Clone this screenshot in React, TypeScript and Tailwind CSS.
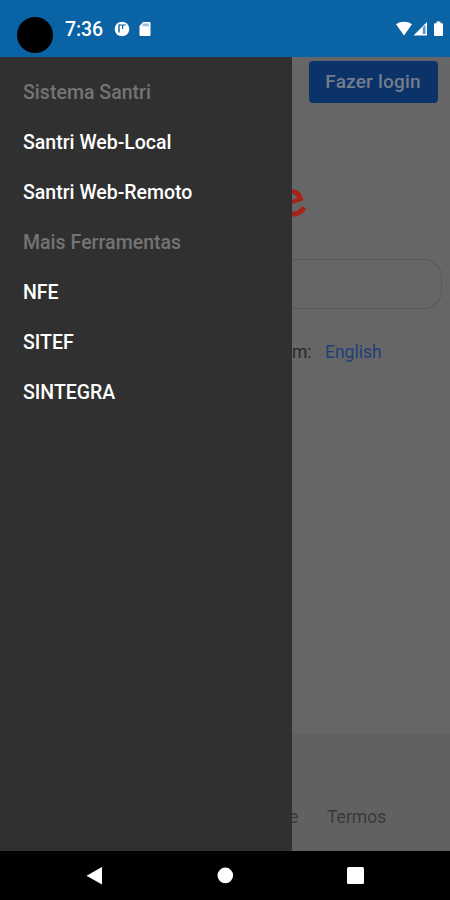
type MenuEntry = {
  label: string;
  heading?: boolean;
};

const entries: MenuEntry[] = [
  { label: 'Sistema Santri', heading: true },
  { label: 'Santri Web-Local' },
  { label: 'Santri Web-Remoto' },
  { label: 'Mais Ferramentas', heading: true },
  { label: 'NFE' },
  { label: 'SITEF' },
  { label: 'SINTEGRA' },
];

function StatusBar() {
  return (
    <header className="flex h-[57px] shrink-0 items-start bg-[#0963a4] pl-[17px] text-white">
      <div className="mt-[17px] size-[36px] rounded-full bg-black" />
      <span className="mt-[18px] ml-[12px] w-[38px] text-[19.5px] leading-[24px] font-medium tracking-[-0.1px] whitespace-nowrap">7:36</span>
      <svg className="mt-[21px] ml-[11px]" width="16" height="16" viewBox="0 0 16 16">
        <circle cx="8" cy="8" r="7.3" fill="white" />
        <path d="M5 3.5v8" stroke="#0963a4" strokeWidth="1.4" />
        <path d="M8.6 4v4" stroke="#0963a4" strokeWidth="1.2" />
        <path d="M5 4h6.8" stroke="#0963a4" strokeWidth="1" />
      </svg>
      <svg className="mt-[21px] ml-[8px]" width="14" height="16" viewBox="0 0 14 16">
        <path d="M5 1h6.5a1 1 0 0 1 1 1v12a1 1 0 0 1-1 1h-9a1 1 0 0 1-1-1V5z" fill="white" />
        <path d="M4.5 2.5h6.5v2.8H4.5z" fill="#9dbfdc" />
      </svg>
      <div className="mt-[21px] mr-[6px] ml-auto flex">
        <svg width="18" height="16" viewBox="0 0 18 16">
          <path d="M1 3.2C5.4-.1 12.6-.1 17 3.2L9 14.4z" fill="white" />
        </svg>
        <svg width="15" height="16" viewBox="0 0 15 16">
          <path d="M14 1v13.5H.5z" fill="white" />
          <path d="M9.8 6.5 12.5 4v9H9.8z" fill="#5795c3" />
        </svg>
        <svg className="ml-[5px]" width="11" height="16" viewBox="0 0 11 16">
          <path d="M3.5.5h4v1.7H9a1 1 0 0 1 1 1V14a1 1 0 0 1-1 1H2a1 1 0 0 1-1-1V3.2a1 1 0 0 1 1-1h1.5z" fill="white" />
        </svg>
      </div>
    </header>
  );
}

function Drawer() {
  return (
    <nav className="w-[292px] shrink-0 bg-[#303030] pt-[11px]">
      <ul>
        {entries.map((entry) => (
          <li
            key={entry.label}
            className={`flex h-[50px] items-center pl-[23px] text-[19.5px] font-medium ${
              entry.heading ? 'tracking-[0.03px] text-[#747474]' : 'text-white'
            }`}
          >
            {entry.label}
          </li>
        ))}
      </ul>
    </nav>
  );
}

// The part of the search page that stays visible beside the open drawer
function DimmedPage() {
  return (
    <main className="flex min-w-0 flex-1 flex-col overflow-hidden bg-[#666666]">
      <button className="mt-[4px] ml-[17px] h-[42px] w-[129px] shrink-0 rounded-[4px] bg-[#0b3269] pr-[1px] text-[19px] font-medium tracking-[0.2px] text-[#747d8b]">
        Fazer login
      </button>
      <div className="mt-[66px] h-[56px] shrink-0">
        <span className="-ml-[16px] inline-block -rotate-[18deg] font-['Lato'] text-[52px] leading-[56px] font-bold text-[#a62318]">
          e
        </span>
      </div>
      <div className="mt-[34px] mr-[8px] h-[50px] shrink-0 rounded-r-[18px] border border-l-0 border-[#5a5a5a]" />
      <p className="mt-[31px] flex h-[24px] shrink-0 text-[17.5px] leading-[24px]">
        <span className="w-[33px] text-[#292929]">m:</span>
        <a className="text-[#203f77]">English</a>
      </p>
      <footer className="mt-auto h-[117px] shrink-0 bg-[#616161]">
        <div className="h-[47px] border-b border-[#5e5e5e]" />
        <div className="flex h-[72px] items-center text-[17.5px] text-[#393939]">
          <span className="-ml-[3px] w-[38px]">e</span>
          <span>Termos</span>
        </div>
      </footer>
    </main>
  );
}

function NavigationBar() {
  return (
    <div className="flex h-[49px] shrink-0 items-center bg-black">
      <svg width="450" height="49" viewBox="0 0 450 49" fill="white">
        <path d="M102 16v17.5L86.5 24.7z" />
        <circle cx="225.3" cy="24.4" r="7.8" />
        <rect x="347" y="16" width="17" height="17" rx="1.5" />
      </svg>
    </div>
  );
}

export default function App() {
  return (
    <div className="flex h-[900px] w-[450px] flex-col overflow-hidden font-['Roboto',sans-serif]">
      <StatusBar />
      <div className="flex min-h-0 flex-1">
        <Drawer />
        <DimmedPage />
      </div>
      <NavigationBar />
    </div>
  );
}
